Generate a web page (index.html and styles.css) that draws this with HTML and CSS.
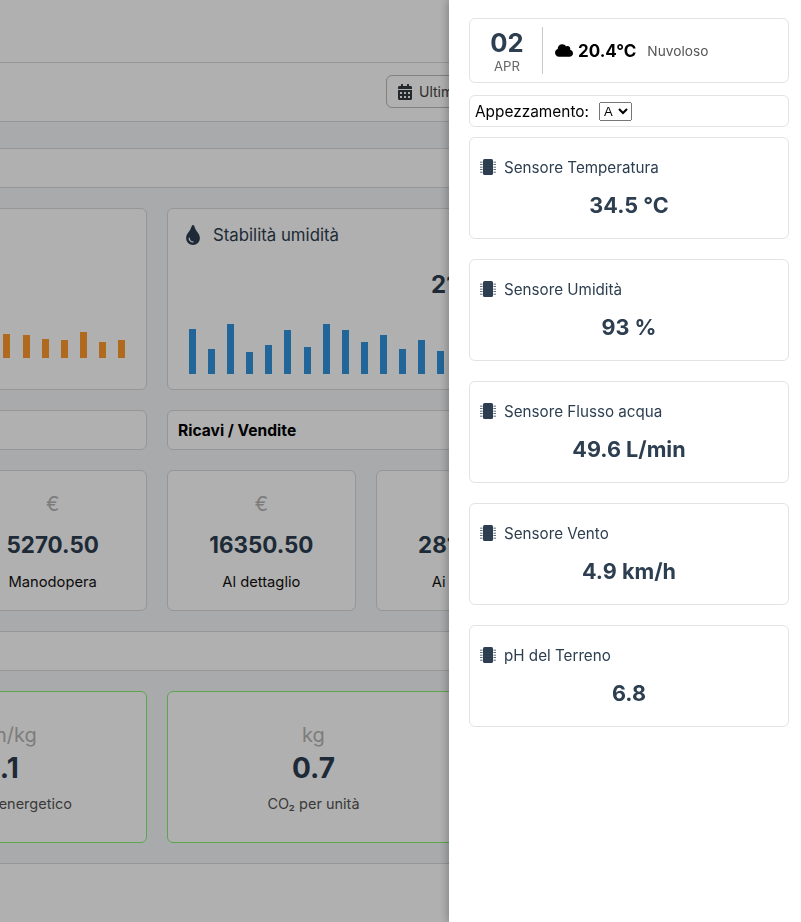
FILE: index.html
```html
<!DOCTYPE html>
<html lang="it">
<head>
    <meta charset="UTF-8">
    <meta name="viewport" content="width=device-width, initial-scale=1.0">
    <title>Dashboard azienda agricola</title>
    <link rel="stylesheet" href="styles.css">
</head>
<body>
    <div class="main">
        <div class="topbar"></div>
        <div class="page-head">
            <button class="range-btn">
                <svg class="range-icon" viewBox="0 0 448 512"><path d="M0 464c0 26.5 21.5 48 48 48h352c26.5 0 48-21.5 48-48V192H0v272zm320-196c0-6.6 5.4-12 12-12h40c6.6 0 12 5.4 12 12v40c0 6.6-5.4 12-12 12h-40c-6.6 0-12-5.4-12-12v-40zm0 128c0-6.6 5.4-12 12-12h40c6.6 0 12 5.4 12 12v40c0 6.6-5.4 12-12 12h-40c-6.6 0-12-5.4-12-12v-40zM192 268c0-6.6 5.4-12 12-12h40c6.6 0 12 5.4 12 12v40c0 6.6-5.4 12-12 12h-40c-6.6 0-12-5.4-12-12v-40zm0 128c0-6.6 5.4-12 12-12h40c6.6 0 12 5.4 12 12v40c0 6.6-5.4 12-12 12h-40c-6.6 0-12-5.4-12-12v-40zM64 268c0-6.6 5.4-12 12-12h40c6.6 0 12 5.4 12 12v40c0 6.6-5.4 12-12 12H76c-6.6 0-12-5.4-12-12v-40zm0 128c0-6.6 5.4-12 12-12h40c6.6 0 12 5.4 12 12v40c0 6.6-5.4 12-12 12H76c-6.6 0-12-5.4-12-12v-40zM400 64h-48V16c0-8.8-7.2-16-16-16h-32c-8.8 0-16 7.2-16 16v48H160V16c0-8.8-7.2-16-16-16h-32c-8.8 0-16 7.2-16 16v48H48C21.5 64 0 85.5 0 112v48h448v-48c0-26.5-21.5-48-48-48z"/></svg>
                Ultimi 30 giorni
            </button>
        </div>

        <div class="band"></div>

        <div class="row">
            <div class="card chart-card">
                <div class="bars bars-orange">
                    <span style="height:24px"></span><span style="height:23px"></span><span style="height:19px"></span><span style="height:18px"></span><span style="height:26px"></span><span style="height:16px"></span><span style="height:18px"></span>
                </div>
            </div>
            <div class="card chart-card">
                <div class="chart-title">
                    <svg class="drop-icon" viewBox="0 0 352 512"><path d="M205.22 22.09c-7.94-28.78-49.44-30.12-58.44 0C100.01 179.85 0 222.72 0 333.91 0 432.35 78.72 512 176 512s176-79.65 176-178.09c0-111.75-99.79-153.34-146.78-311.82zM176 448c-61.75 0-112-50.25-112-112 0-8.84 7.16-16 16-16s16 7.16 16 16c0 44.11 35.89 80 80 80 8.84 0 16 7.16 16 16s-7.16 16-16 16z"/></svg>
                    Stabilità umidità
                </div>
                <div class="chart-value">21.7 %</div>
                <div class="bars bars-blue">
                    <span style="height:45px"></span><span style="height:25px"></span><span style="height:50px"></span><span style="height:22px"></span><span style="height:29px"></span><span style="height:44px"></span><span style="height:27px"></span><span style="height:50px"></span><span style="height:44px"></span><span style="height:32px"></span><span style="height:39px"></span><span style="height:25px"></span><span style="height:34px"></span><span style="height:23px"></span>
                </div>
            </div>
        </div>

        <div class="row">
            <div class="card heading-card"></div>
            <div class="card heading-card">Ricavi / Vendite</div>
        </div>

        <div class="row">
            <div class="stat-grid">
                <div class="card stat-card stat-last"><div class="stat-unit">€</div><div class="stat-value">5270.50</div><div class="stat-label">Manodopera</div></div>
            </div>
            <div class="stat-grid">
                <div class="card stat-card"><div class="stat-unit">€</div><div class="stat-value">16350.50</div><div class="stat-label">Al dettaglio</div></div>
                <div class="card stat-card"><div class="stat-unit">€</div><div class="stat-value">28120.00</div><div class="stat-label">Ai grossisti</div></div>
            </div>
        </div>

        <div class="bar"></div>

        <div class="row">
            <div class="eco-grid">
                <div class="card eco-card eco-last"><div class="eco-unit">kWh/kg</div><div class="eco-value">2.1</div><div class="eco-label">Consumo energetico</div></div>
            </div>
            <div class="eco-grid">
                <div class="card eco-card"><div class="eco-unit">kg</div><div class="eco-value">0.7</div><div class="eco-label">CO₂ per unità</div></div>
            </div>
        </div>

        <div class="bar bar-last"></div>
    </div>

    <div class="backdrop"></div>

    <aside class="panel">
        <div class="p-card today">
            <div class="today-date">
                <div class="today-day">02</div>
                <div class="today-month">APR</div>
            </div>
            <div class="today-weather">
                <svg class="cloud-icon" viewBox="0 0 640 512"><path d="M0 336c0 79.5 64.5 144 144 144H512c70.7 0 128-57.3 128-128c0-61.9-43.9-113.5-102.4-125.4c4.1-10.7 6.4-22.4 6.4-34.6c0-53-43-96-96-96c-19.7 0-38.1 6-53.3 16.2C367 64.2 315.3 32 256 32C167.6 32 96 103.6 96 192c0 2.7 .1 5.4 .2 8.1C40.2 219.8 0 273.2 0 336z"/></svg>
                <span class="today-temp">20.4°C</span>
                <span class="today-desc">Nuvoloso</span>
            </div>
        </div>

        <div class="p-card plot">
            <label class="plot-label" for="plot">Appezzamento:</label>
            <select class="plot-select" id="plot"><option>A</option><option>B</option></select>
        </div>

        <div class="p-card sensor">
            <div class="sensor-title"><svg class="chip-icon" viewBox="0 0 512 512"><use href="#chip"/></svg>Sensore Temperatura</div>
            <div class="sensor-value">34.5 °C</div>
        </div>
        <div class="p-card sensor">
            <div class="sensor-title"><svg class="chip-icon" viewBox="0 0 512 512"><use href="#chip"/></svg>Sensore Umidità</div>
            <div class="sensor-value">93 %</div>
        </div>
        <div class="p-card sensor">
            <div class="sensor-title"><svg class="chip-icon" viewBox="0 0 512 512"><use href="#chip"/></svg>Sensore Flusso acqua</div>
            <div class="sensor-value">49.6 L/min</div>
        </div>
        <div class="p-card sensor">
            <div class="sensor-title"><svg class="chip-icon" viewBox="0 0 512 512"><use href="#chip"/></svg>Sensore Vento</div>
            <div class="sensor-value">4.9 km/h</div>
        </div>
        <div class="p-card sensor">
            <div class="sensor-title"><svg class="chip-icon" viewBox="0 0 512 512"><use href="#chip"/></svg>pH del Terreno</div>
            <div class="sensor-value">6.8</div>
        </div>
    </aside>

    <svg class="defs" width="0" height="0">
        <defs>
            <g id="chip">
                <rect x="96" y="0" width="320" height="512" rx="48"/>
                <path d="M0 88h84v24H0zM0 168h84v24H0zM0 248h84v24H0zM0 328h84v24H0zM0 408h84v24H0zM428 88h84v24h-84zM428 168h84v24h-84zM428 248h84v24h-84zM428 328h84v24h-84zM428 408h84v24h-84z"/>
            </g>
        </defs>
    </svg>
</body>
</html>
```

FILE: styles.css
```css
* {
    box-sizing: border-box;
}
html, body {
    height: 100%;
}
body {
    margin: 0;
    overflow: hidden;
    background-color: #f5f6f9;
    font-family: Inter, "Liberation Sans", sans-serif;
    color: #2c3e50;
}

/* dashboard behind the panel, pushed to the left */
.main {
    width: 1300px;
    margin-left: -480px;
}
.topbar {
    height: 63px;
    background-color: #fff;
    border-bottom: 1px solid #d9d9d9;
}
.page-head {
    height: 59px;
    display: flex;
    align-items: center;
    padding-left: 866px;
    background-color: #fff;
    border-bottom: 1px solid #d9d9d9;
}
.range-btn {
    display: flex;
    align-items: center;
    gap: 7px;
    width: 160px;
    height: 33px;
    margin-top: -1px;
    padding: 0 11px;
    background: none;
    border: 1px solid #bbb;
    border-radius: 6px;
    font-family: inherit;
    font-size: 14px;
    color: #444;
}
.range-icon {
    width: 14px;
    height: 16px;
    fill: #343a40;
    flex: none;
}
.band {
    height: 40px;
    margin-top: 26px;
    margin-bottom: 20px;
    background-color: #fff;
    border-top: 1px solid #d9d9d9;
    border-bottom: 1px solid #d9d9d9;
}
.bar {
    height: 40px;
    margin-bottom: 20px;
    background-color: #fff;
    border-top: 1px solid #d9d9d9;
    border-bottom: 1px solid #d9d9d9;
}
.bar-last {
    height: 80px;
    margin-bottom: 0;
}
.row {
    display: grid;
    grid-template-columns: 606px 606px;
    gap: 20px;
    padding: 0 21px;
    margin-bottom: 20px;
}
.card {
    background-color: #fff;
    border: 1px solid #d9d9d9;
    border-radius: 6px;
}

/* charts */
.chart-card {
    height: 182px;
    padding: 16px 19px 15px 18px;
    display: flex;
    flex-direction: column;
}
.chart-title {
    display: flex;
    align-items: center;
    gap: 13px;
    height: 20px;
    font-size: 16.8px;
}
.drop-icon {
    width: 14px;
    height: 20px;
    fill: #2c3e50;
    flex: none;
}
.chart-value {
    margin-top: 25px;
    text-align: center;
    font-size: 24px;
    font-weight: 700;
    line-height: 30px;
}
.bars {
    display: flex;
    align-items: flex-end;
    gap: 12.1px;
    margin-top: auto;
    padding-left: 3px;
}
.bars span {
    display: block;
    width: 7px;
    flex: none;
}
.bars-blue span {
    background-color: #3093de;
}
.bars-orange {
    justify-content: flex-end;
    padding-right: 2px;
    margin-bottom: 16px;
}
.bars-orange span {
    background-color: #ff9a2e;
}

/* section headings */
.heading-card {
    height: 40px;
    padding: 0 10px;
    display: flex;
    align-items: center;
    font-size: 15.6px;
    font-weight: 700;
    color: #000;
}

/* money stats */
.stat-grid {
    display: grid;
    grid-template-columns: repeat(3, 1fr);
    gap: 20px;
}
.stat-card {
    height: 141px;
    display: flex;
    flex-direction: column;
    align-items: center;
    padding-top: 20px;
}
.stat-last {
    grid-column: 3;
}
.stat-unit {
    font-size: 20px;
    line-height: 26px;
    color: #b5b5b5;
}
.stat-value {
    margin-top: 13px;
    font-size: 22.4px;
    font-weight: 700;
    line-height: 29px;
}
.stat-label {
    margin-top: 13px;
    font-size: 14.72px;
    line-height: 20px;
    color: #111;
}

/* environment stats */
.eco-grid {
    display: grid;
    grid-template-columns: repeat(2, 1fr);
    gap: 20px;
}
.eco-card {
    height: 152px;
    display: flex;
    flex-direction: column;
    align-items: center;
    padding-top: 30px;
    border-color: #84f070;
}
.eco-last {
    grid-column: 2;
}
.eco-unit {
    font-size: 20px;
    line-height: 26px;
    color: #b5b5b5;
}
.eco-value {
    margin-top: 2px;
    font-size: 28px;
    font-weight: 700;
    line-height: 36px;
}
.eco-label {
    margin-top: 8px;
    font-size: 14.5px;
    line-height: 20px;
    color: #555;
}

/* backdrop and side panel */
.backdrop {
    position: fixed;
    inset: 0;
    background-color: rgba(0, 0, 0, 0.31);
}
.panel {
    position: fixed;
    top: 0;
    right: 0;
    bottom: 0;
    width: 352px;
    padding: 18px 12px 0 20px;
    background-color: #fff;
    box-shadow: -2px 0 8px rgba(0, 0, 0, 0.25);
}
.p-card {
    background-color: #fff;
    border: 1px solid #e3e3e3;
    border-radius: 6px;
}
.today {
    height: 65px;
    display: flex;
    align-items: center;
}
.today-date {
    width: 73px;
    height: 47px;
    padding-left: 2px;
    border-right: 1px solid #c8c8c8;
    display: flex;
    flex-direction: column;
    align-items: center;
}
.today-day {
    margin-top: 1px;
    font-size: 25.6px;
    font-weight: 700;
    line-height: 30px;
    color: #2c3e50;
}
.today-month {
    font-size: 13.2px;
    line-height: 16px;
    color: #666;
}
.today-weather {
    display: flex;
    align-items: center;
    padding-left: 12px;
}
.cloud-icon {
    width: 18px;
    height: 15px;
    fill: #000;
    margin-right: 5px;
}
.today-temp {
    font-size: 17px;
    font-weight: 700;
    color: #000;
}
.today-desc {
    margin-left: 11px;
    font-size: 13.7px;
    color: #555;
}
.plot {
    height: 32px;
    margin-top: 12px;
    margin-bottom: 10px;
    padding-left: 5px;
    display: flex;
    align-items: center;
    font-size: 15.4px;
    color: #000;
}
.plot-label {
    margin-right: 10px;
}
.plot-select {
    width: 33px;
    height: 19px;
    font-size: 13px;
}
.sensor {
    height: 102px;
    margin-bottom: 20px;
    padding: 19px 10px 0;
}
.sensor-title {
    display: flex;
    align-items: center;
    gap: 8px;
    height: 20px;
    font-size: 15.2px;
}
.chip-icon {
    width: 16px;
    height: 16px;
    fill: #2c3e50;
    flex: none;
}
.sensor-value {
    margin-top: 13px;
    text-align: center;
    font-size: 21.6px;
    font-weight: 700;
    line-height: 30px;
}
.defs {
    position: absolute;
}
```
